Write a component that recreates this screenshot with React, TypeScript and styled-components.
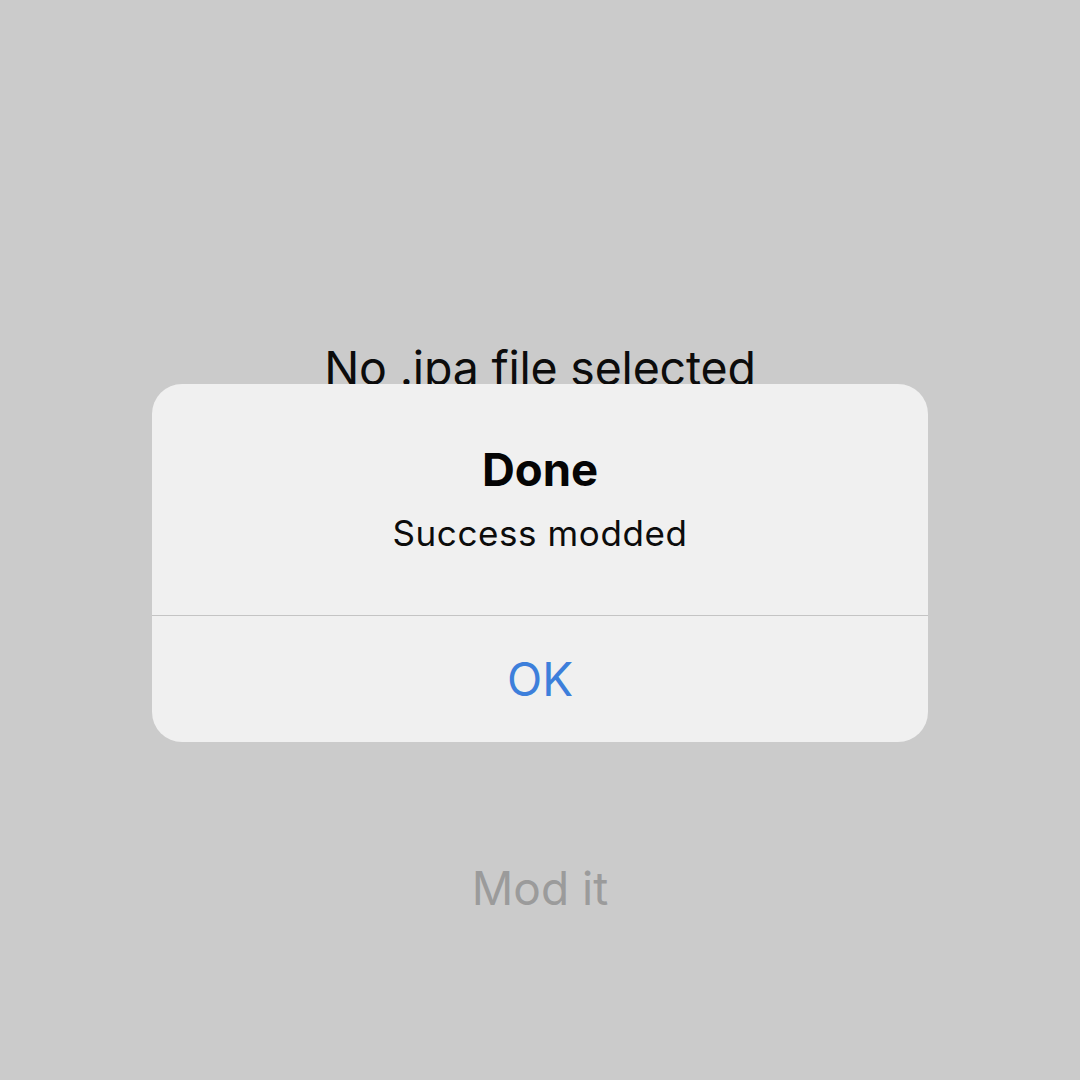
import styled, { createGlobalStyle } from "styled-components";

const GlobalStyle = createGlobalStyle`
  html, body {
    margin: 0;
    padding: 0;
    background: #cbcbcb;
  }
  body {
    font-family: Inter, "Liberation Sans", "Noto Sans", sans-serif;
    -webkit-font-smoothing: antialiased;
  }
`;

const Screen = styled.main`
  width: 1080px;
  height: 1080px;
  background: #cbcbcb;
  display: flex;
  flex-direction: column;
  align-items: center;
  padding-top: 339px;
  gap: 462px;
  box-sizing: border-box;
  position: relative;
  overflow: hidden;
`;

const FileLabel = styled.div`
  font-size: 46.5px;
  line-height: 58px;
  color: #0c0c0c;
  letter-spacing: -0.2px;
`;

const ModButton = styled.button`
  font-family: inherit;
  font-size: 46px;
  line-height: 58px;
  color: #9b9b9b;
  background: none;
  border: none;
  padding: 0;
`;

const Overlay = styled.div`
  position: absolute;
  inset: 0;
  display: flex;
  justify-content: center;
  align-items: flex-start;
  padding-top: 384px;
`;

const Alert = styled.div`
  width: 776px;
  height: 358px;
  background: #f0f0f0;
  border-radius: 30px;
  display: flex;
  flex-direction: column;
  overflow: hidden;
`;

const AlertBody = styled.div`
  display: flex;
  flex-direction: column;
  align-items: center;
  padding: 58px 40px 60px;
  gap: 13px;
  border-bottom: 1px solid #c4c4c4;
`;

const Title = styled.div`
  font-size: 45.5px;
  font-weight: 700;
  line-height: 56px;
  color: #050505;
`;

const Message = styled.div`
  font-size: 35px;
  line-height: 44px;
  color: #0c0c0c;
  letter-spacing: 0.6px;
`;

const ActionButton = styled.button`
  flex: 1;
  font-family: inherit;
  font-size: 46px;
  color: #3d7fdb;
  background: none;
  border: none;
  display: flex;
  align-items: center;
  justify-content: center;
`;

export default function App() {
  return (
    <>
      <GlobalStyle />
      <Screen>
        <FileLabel>No .ipa file selected</FileLabel>
        <ModButton>Mod it</ModButton>
        <Overlay>
          <Alert>
            <AlertBody>
              <Title>Done</Title>
              <Message>Success modded</Message>
            </AlertBody>
            <ActionButton>OK</ActionButton>
          </Alert>
        </Overlay>
      </Screen>
    </>
  );
}
